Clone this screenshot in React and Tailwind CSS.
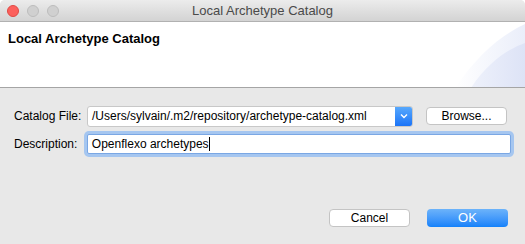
import React from 'react';

const Light = ({ color, border }) => (
  <span className={`w-3 h-3 rounded-full border ${color} ${border}`} />
);

const App = () => {
  return (
    <div className="w-[525px] h-[244px] flex flex-col bg-[#e8e8e8] text-[12px] text-black overflow-hidden rounded-t-[5px]" style={{ fontFamily: '"Liberation Sans", Arial, sans-serif' }}>
      {/* Title bar */}
      <div className="relative h-[22px] shrink-0 flex items-center bg-gradient-to-b from-[#ececec] to-[#d3d3d3] border-b border-[#b1b1b1]">
        <div className="flex gap-2 pl-[7px]">
          <Light color="bg-[#fc605c]" border="border-[#de4a45]" />
          <Light color="bg-[#d0d0d0]" border="border-[#bcbcbc]" />
          <Light color="bg-[#d0d0d0]" border="border-[#bcbcbc]" />
        </div>
        <div className="absolute inset-0 flex items-center justify-center text-[13px] text-[#4a4a4a]">Local Archetype Catalog</div>
      </div>

      {/* Header */}
      <div className="relative h-[66px] shrink-0 bg-white border-b border-[#a5a5a5] overflow-hidden">
        <div className="absolute left-[8px] top-[7px] font-bold text-[13px]">Local Archetype Catalog</div>
        <svg className="absolute right-0 top-0" width="70" height="66" viewBox="0 0 70 66">
          <defs>
            <linearGradient id="g1" x1="0" y1="0" x2="1" y2="0">
              <stop offset="0" stopColor="#ffffff" />
              <stop offset="1" stopColor="#eaeefa" />
            </linearGradient>
            <linearGradient id="g2" x1="0" y1="0" x2="1" y2="0">
              <stop offset="0" stopColor="#eef1fb" />
              <stop offset="1" stopColor="#dde3f6" />
            </linearGradient>
          </defs>
          <path d="M0 66 C 20 36, 44 14, 70 2 L70 66 Z" fill="url(#g1)" />
          <path d="M16 66 C 30 44, 50 28, 70 21 L70 66 Z" fill="url(#g2)" />
        </svg>
      </div>

      {/* Body */}
      <div className="flex-1 flex flex-col px-[14px] pt-[17px]">
        <div className="flex items-center h-[22px]">
          <span className="w-[73px]">Catalog File:</span>
          <div className="flex h-[21px] w-[326px] bg-white border border-[#c8c8c8] rounded-[3px] overflow-hidden">
            <span className="flex-1 pl-[4px] leading-[19px] whitespace-nowrap overflow-hidden">/Users/sylvain/.m2/repository/archetype-catalog.xml</span>
            <span className="w-[17px] flex items-center justify-center bg-gradient-to-b from-[#57a8fd] to-[#1a73f7]">
              <svg width="8" height="6" viewBox="0 0 8 6"><path d="M1 1.5 L4 4.5 L7 1.5" fill="none" stroke="white" strokeWidth="1.4" /></svg>
            </span>
          </div>
          <button className="ml-[13px] w-[81px] h-[18px] bg-white border border-[#c4c4c4] rounded-[4px] text-[12px] leading-[16px]">Browse...</button>
        </div>
        <div className="flex items-center h-[22px] mt-[6px]">
          <span className="w-[73px]">Description:</span>
          <div className="flex items-center h-[20px] w-[425px] bg-white border border-[#7aa7e4] rounded-[2px] ring-[3px] ring-[#a5c6f0] pl-[4px]">
            Openflexo archetypes<span className="w-px h-[14px] bg-black" />
          </div>
        </div>
        <div className="flex-1" />
        <div className="flex justify-end gap-[17px] pr-[3px] pb-[17px]">
          <button className="w-[81px] h-[18px] bg-white border border-[#c4c4c4] rounded-[4px] leading-[16px]">Cancel</button>
          <button className="w-[81px] h-[18px] rounded-[4px] text-white text-[13px] leading-[18px] bg-gradient-to-b from-[#6cb3fa] to-[#1181fa]">OK</button>
        </div>
      </div>
    </div>
  );
};

export default App;
